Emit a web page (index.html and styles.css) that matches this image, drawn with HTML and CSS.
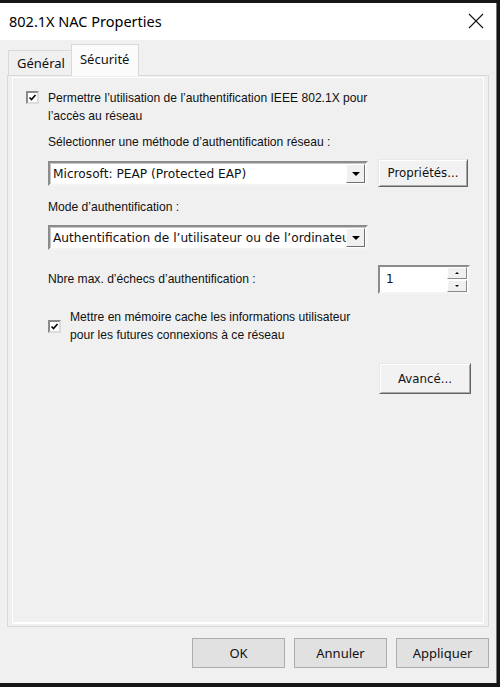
FILE: index.html
```html
<!DOCTYPE html>
<html lang="fr">
<head>
<meta charset="UTF-8">
<title>802.1X NAC Properties</title>
<link rel="stylesheet" href="styles.css">
</head>
<body>
    <div class="window">
        <div class="titlebar">
            <span class="title">802.1X NAC Properties</span>
            <svg class="close" width="16" height="16" viewBox="0 0 16 16">
                <path d="M1 1 L15 15 M15 1 L1 15" stroke="#111" stroke-width="1.1" fill="none"/>
            </svg>
        </div>
        <div class="content">
            <div class="tabs">
                <div class="tab">Général</div>
                <div class="tab active">Sécurité</div>
            </div>
            <div class="panel">
                <div class="panel-inner">
                    <div class="check-row">
                        <span class="box"><svg width="9" height="9" viewBox="0 0 9 9"><path d="M1.5 4.5 L3.5 6.5 L7.5 2" stroke="#000" stroke-width="1.6" fill="none"/></svg></span>
                        <span class="check-text">Permettre l’utilisation de l’authentification IEEE 802.1X pour<br>l’accès au réseau</span>
                    </div>
                    <div class="indent">
                        <div class="label first">Sélectionner une méthode d’authentification réseau :</div>
                        <div class="row">
                            <div class="select">
                                <span class="select-text">Microsoft: PEAP (Protected EAP)</span>
                                <span class="arrow"><span class="tri"></span></span>
                            </div>
                            <button type="button" class="btn props">Propriétés...</button>
                        </div>
                        <div class="label mode">Mode d’authentification :</div>
                        <div class="select">
                            <span class="select-text">Authentification de l’utilisateur ou de l’ordinateur</span>
                            <span class="arrow"><span class="tri"></span></span>
                        </div>
                        <div class="row spin-row">
                            <span class="label">Nbre max. d’échecs d’authentification :</span>
                            <div class="spinner">
                                <span class="spin-value">1</span>
                                <span class="spin-btns">
                                    <span class="spin-btn"><span class="tri up"></span></span>
                                    <span class="spin-btn"><span class="tri small"></span></span>
                                </span>
                            </div>
                        </div>
                        <div class="check-row cache">
                            <span class="box"><svg width="9" height="9" viewBox="0 0 9 9"><path d="M1.5 4.5 L3.5 6.5 L7.5 2" stroke="#000" stroke-width="1.6" fill="none"/></svg></span>
                            <span class="check-text">Mettre en mémoire cache les informations utilisateur<br>pour les futures connexions à ce réseau</span>
                        </div>
                        <div class="advanced-row">
                            <button type="button" class="btn">Avancé...</button>
                        </div>
                    </div>
                </div>
            </div>
            <div class="footer">
                <button type="button" class="dlg-btn">OK</button>
                <button type="button" class="dlg-btn">Annuler</button>
                <button type="button" class="dlg-btn">Appliquer</button>
            </div>
        </div>
    </div>
</body>
</html>
```

FILE: styles.css
```css
body {
    margin: 0;
    padding: 0;
    width: 500px;
    height: 687px;
    background: #161616;
    overflow: hidden;
    font-family: "Liberation Sans", Arial, sans-serif;
    color: #111;
}

.window {
    margin-top: 3px;
    width: 496px;
    height: 680px;
    border-right: 1px solid #777;
    background: #f0f0f0;
    display: flex;
    flex-direction: column;
}

.titlebar {
    height: 37px;
    background: #fff;
    display: flex;
    align-items: center;
    justify-content: space-between;
    padding: 0 12px 0 9px;
}

.title {
    font-family: "Noto Sans", "Open Sans", sans-serif;
    font-size: 14.5px;
    color: #000;
    margin-top: -1px;
}

.close {
    margin-top: -1px;
}

.content {
    flex: 1;
    display: flex;
    flex-direction: column;
    padding: 0 7px 15px 7px;
}

.tabs {
    display: flex;
    align-items: flex-end;
    height: 35px;
    padding-left: 1px;
    font-family: "Noto Sans", "Open Sans", sans-serif;
    font-size: 13px;
    position: relative;
    z-index: 1;
}

.tab {
    height: 24px;
    padding: 0 6px 0 8px;
    border: 1px solid #d9d9d9;
    border-bottom: none;
    border-right: none;
    display: flex;
    align-items: center;
    color: #111;
}

.tab.active {
    height: 28px;
    background: #fbfbfb;
    border-right: 1px solid #d9d9d9;
    padding: 0 8px 3px 8px;
    margin-bottom: -1px;
    width: 50px;
}

.panel {
    flex: 1;
    border: 1px solid #d9d9d9;
    padding: 1px 4px 2px 4px;
    display: flex;
}

.panel-inner {
    flex: 1;
    border: 1px solid #fff;
    border-width: 1px 1px 2px 1px;
    padding: 11px 12px 0 13px;
    font-size: 12.1px;
}

.check-row {
    display: flex;
    align-items: flex-start;
    line-height: 18px;
}

.box {
    width: 9px;
    height: 9px;
    background: #fff;
    border: 2px solid;
    border-color: #8a8a8a #dcdcdc #dcdcdc #8a8a8a;
    margin-top: 2px;
    margin-right: 9px;
    display: flex;
    align-items: center;
    justify-content: center;
}

.indent {
    padding-left: 22px;
}

.label {
    line-height: 18px;
}

.label.first {
    margin-top: 8px;
}

.row {
    display: flex;
    align-items: center;
}

.select {
    width: 316px;
    height: 21px;
    margin-top: 9px;
    background: #fff;
    border: 2px solid;
    border-color: #8c8c8c #f4f4f4 #f4f4f4 #8c8c8c;
    box-shadow: inset 1px 1px 0 #c8c8c8;
    display: flex;
    align-items: center;
    justify-content: space-between;
    font-family: "DejaVu Sans", sans-serif;
    font-size: 12.2px;
}

.select-text {
    padding-left: 3px;
    white-space: nowrap;
    overflow: hidden;
}

.arrow {
    width: 17px;
    height: 17px;
    margin-right: 1px;
    flex-shrink: 0;
    background: #f0f0f0;
    border: 1px solid;
    border-color: #fff #707070 #707070 #fff;
    display: flex;
    align-items: center;
    justify-content: center;
}

.tri {
    width: 0;
    height: 0;
    border-left: 4px solid transparent;
    border-right: 4px solid transparent;
    border-top: 4px solid #000;
}

.tri.small {
    border-left-width: 2px;
    border-right-width: 2px;
    border-top-width: 2px;
}

.tri.up {
    border-left: 2px solid transparent;
    border-right: 2px solid transparent;
    border-top: none;
    border-bottom: 2px solid #000;
}

.btn {
    height: 28px;
    width: 90px;
    font-family: "DejaVu Sans", sans-serif;
    font-size: 11.8px;
    color: #111;
    background: #f2f2f2;
    border: 1px solid;
    border-color: #e8e8e8 #646464 #646464 #e8e8e8;
    box-shadow: inset 1px 1px 0 #fff, inset -1px -1px 0 #a8a8a8;
    padding: 0;
}

.props {
    margin-left: 10px;
    margin-top: 8px;
}

.label.mode {
    margin-top: 11px;
}

.spin-row {
    justify-content: space-between;
    margin-top: 15px;
    padding-right: 1px;
}

.spin-row .label {
    margin-top: -2px;
}

.spinner {
    width: 88px;
    height: 25px;
    background: #fff;
    border: 2px solid;
    border-color: #8c8c8c #f4f4f4 #f4f4f4 #8c8c8c;
    display: flex;
    justify-content: space-between;
    align-items: center;
    font-family: "DejaVu Sans", sans-serif;
    font-size: 12px;
}

.spin-value {
    padding-left: 6px;
    margin-top: -2px;
}

.spin-btns {
    display: flex;
    flex-direction: column;
    gap: 1px;
    margin-right: 1px;
}

.spin-btn {
    width: 18px;
    height: 10px;
    background: #f0f0f0;
    border: 1px solid;
    border-color: #fff #8a8a8a #8a8a8a #fff;
    display: flex;
    align-items: center;
    justify-content: center;
}

.check-row.cache {
    margin-top: 14px;
    align-items: center;
}

.check-row.cache .box {
    margin-top: 1px;
}

.advanced-row {
    display: flex;
    justify-content: flex-end;
    margin-top: 19px;
    padding-right: 0;
}

.advanced-row .btn {
    width: 92px;
    height: 31px;
}

.footer {
    display: flex;
    justify-content: flex-end;
    gap: 9px;
    margin-top: 11px;
}

.dlg-btn {
    width: 93px;
    height: 30px;
    background: #e1e1e1;
    border: 1px solid #adadad;
    font-family: "Noto Sans", "Open Sans", sans-serif;
    font-size: 13px;
    color: #111;
    padding: 0;
}
```
